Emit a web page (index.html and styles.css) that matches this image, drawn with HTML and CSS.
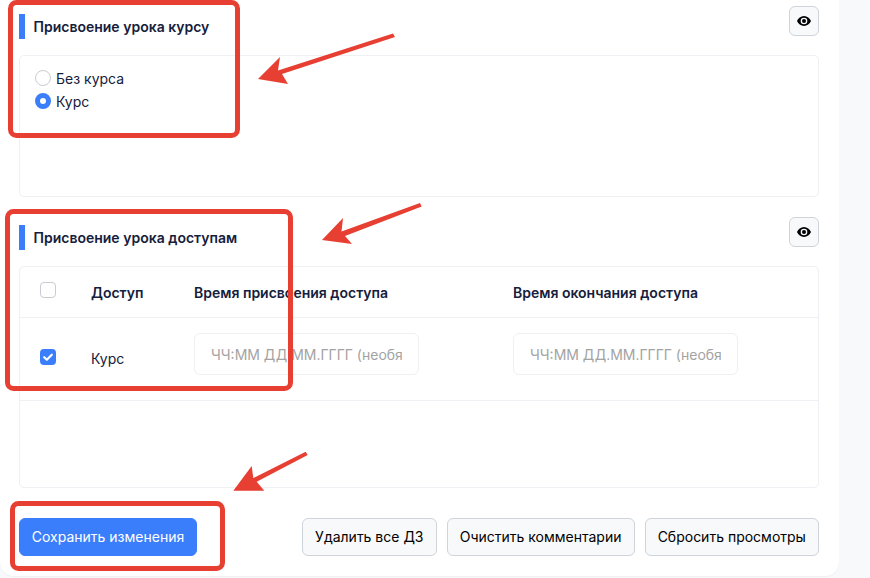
FILE: index.html
```html
<!DOCTYPE html>
<html lang="ru">
<head>
<meta charset="utf-8">
<title>Присвоение урока</title>
<link rel="stylesheet" href="styles.css">
</head>
<body>
<main class="card">
  <section class="block">
    <header class="block-head">
      <h2 class="block-title">Присвоение урока курсу</h2>
      <button class="eye-btn" type="button" aria-label="Показать">
        <svg class="eye" viewBox="0 0 16 16"><path fill="currentColor" d="M8 2.300C4.400 2.300 1.400 4.800 0 8c1.400 3.200 4.400 5.700 8 5.700s6.600-2.500 8-5.700c-1.400-3.200-4.400-5.700-8-5.700Zm0 9.500A3.800 3.800 0 1 1 8 4.200a3.800 3.800 0 0 1 0 7.600Z"/><circle fill="currentColor" cx="8" cy="8" r="2.300"/></svg>
      </button>
    </header>
    <div class="panel panel-course">
      <label class="radio-row"><input class="radio" type="radio" name="course"><span>Без курса</span></label>
      <label class="radio-row"><input class="radio" type="radio" name="course" checked><span>Курс</span></label>
    </div>
  </section>

  <section class="block">
    <header class="block-head">
      <h2 class="block-title">Присвоение урока доступам</h2>
      <button class="eye-btn" type="button" aria-label="Показать">
        <svg class="eye" viewBox="0 0 16 16"><path fill="currentColor" d="M8 2.300C4.400 2.300 1.400 4.800 0 8c1.400 3.200 4.400 5.700 8 5.700s6.600-2.500 8-5.700c-1.400-3.200-4.400-5.700-8-5.700Zm0 9.500A3.800 3.800 0 1 1 8 4.200a3.800 3.800 0 0 1 0 7.600Z"/><circle fill="currentColor" cx="8" cy="8" r="2.300"/></svg>
      </button>
    </header>
    <div class="panel panel-access">
      <div class="row row-head">
        <div class="cell-check"><span class="check"></span></div>
        <div>Доступ</div>
        <div>Время присвоения доступа</div>
        <div>Время окончания доступа</div>
      </div>
      <div class="row row-body">
        <div class="cell-check"><span class="check check-on"><svg viewBox="0 0 16 16"><path d="M4.200 8.200 6.800 10.700 11.800 5.700" fill="none" stroke="#fff" stroke-width="2.200" stroke-linecap="round" stroke-linejoin="round"/></svg></span></div>
        <div class="cell-name">Курс</div>
        <div><input class="time" type="text" placeholder="ЧЧ:ММ ДД.ММ.ГГГГ (необязательно)"></div>
        <div><input class="time" type="text" placeholder="ЧЧ:ММ ДД.ММ.ГГГГ (необязательно)"></div>
      </div>
    </div>
  </section>

  <footer class="actions">
    <button class="btn btn-primary" type="button">Сохранить изменения</button>
    <div class="actions-right">
      <button class="btn" type="button">Удалить все ДЗ</button>
      <button class="btn" type="button">Очистить комментарии</button>
      <button class="btn" type="button">Сбросить просмотры</button>
    </div>
  </footer>
</main>

<svg class="marks" viewBox="0 0 870 578" aria-hidden="true">
  <g class="mark-box">
    <rect x="10.500" y="2.500" width="227" height="133" rx="6"/>
    <rect x="7.500" y="211.500" width="283" height="177" rx="6"/>
    <rect x="12.500" y="503.500" width="210" height="65" rx="6"/>
  </g>
  <g class="mark-arrow">
    <polygon points="258,79 280,57 278,70.500 393,33.500 395,37 282,74 288,84"/>
    <polygon points="322,240 343,218 341.500,231.500 420,203 421.700,206.500 345,236 352,244"/>
    <polygon points="233.300,490.700 251.700,466 253.300,478 305.700,451.700 307.700,455 256.700,481.700 264.300,490.700"/>
  </g>
</svg>
</body>
</html>
```

FILE: styles.css
```css
* { box-sizing: border-box; }

html, body {
  margin: 0;
  height: 100%;
}

body {
  position: relative;
  overflow: hidden;
  background: #f8f9fa;
  font-family: Inter, "Liberation Sans", sans-serif;
  font-size: 14px;
  color: #14203c;
}

.card {
  width: 839px;
  height: 576px;
  padding: 6px 20px 0 19px;
  background: #fff;
  border-radius: 0 0 14px 14px;
  box-shadow: 0 1px 1px #eff0f2;
  display: flex;
  flex-direction: column;
}

.block-head {
  display: flex;
  justify-content: space-between;
  align-items: flex-start;
  height: 49px;
}

.block-title {
  margin: 8px 0 0;
  padding-left: 8.500px;
  height: 25px;
  line-height: 26px;
  border-left: 6px solid #3b7efb;
  font-size: 14px;
  font-weight: 600;
}

.eye-btn {
  width: 30px;
  height: 30px;
  padding: 0;
  background: #f8f9fa;
  border: 1px solid #ced4da;
  border-radius: 6px;
  color: #000;
  display: flex;
  align-items: center;
  justify-content: center;
}

.eye {
  width: 14px;
  height: 14px;
}

.panel {
  background: #fff;
  border: 1px solid #eef0f4;
  border-radius: 5px;
}

.panel-course {
  height: 142px;
  margin-bottom: 20px;
  padding: 11px 15px;
  display: flex;
  flex-direction: column;
  gap: 1px;
}

.panel-access {
  height: 222px;
}

.radio-row {
  display: flex;
  align-items: center;
  gap: 5px;
  height: 22px;
}

.radio {
  appearance: none;
  margin: 0;
  width: 16px;
  height: 16px;
  border: 1px solid #c9ccd1;
  border-radius: 50%;
  background: #fff;
}

.radio:checked {
  border: 5px solid #3b7efb;
}

.row {
  display: grid;
  grid-template-columns: 71px 103px 319px 1fr;
  border-bottom: 1px solid #eef0f4;
}

.row-head {
  height: 51px;
  align-items: center;
  font-weight: 600;
}

.row-body {
  height: 83px;
  align-items: start;
}

.cell-check {
  padding-left: 20px;
  display: flex;
}

.row-head .cell-check {
  margin-top: -4px;
}

.row-body .cell-check {
  margin-top: 31px;
}

.cell-name {
  margin-top: 32px;
}

.check {
  width: 16px;
  height: 16px;
  background: #fff;
  border: 1px solid #c9ccd1;
  border-radius: 4px;
  display: block;
}

.check-on {
  background: #3b7efb;
  border: 0;
}

.check-on svg {
  display: block;
}

.time {
  display: block;
  width: 225px;
  height: 42px;
  margin-top: 15px;
  padding: 0 16px;
  background: #fff;
  border: 1px solid #eef0f4;
  border-radius: 6px;
  font: inherit;
  color: inherit;
}

.time::placeholder {
  color: #a3a3a3;
  opacity: 1;
}

.actions {
  margin-top: 30px;
  display: flex;
  justify-content: space-between;
}

.actions-right {
  display: flex;
  gap: 10px;
}

.btn {
  height: 38px;
  padding: 0 12.100px;
  background: #f8f9fa;
  border: 1px solid #ced4da;
  border-radius: 6px;
  font: inherit;
  line-height: 34px;
  color: #000;
  white-space: nowrap;
}

.btn-primary {
  width: 178px;
  padding: 0;
  background: #3b7efb;
  border-color: #3b7efb;
  color: #fff;
}

.marks {
  position: absolute;
  inset: 0;
  width: 870px;
  height: 578px;
  pointer-events: none;
}

.mark-box rect {
  fill: none;
  stroke: #e83f33;
  stroke-width: 5;
}

.mark-arrow polygon {
  fill: #e83f33;
}
```
